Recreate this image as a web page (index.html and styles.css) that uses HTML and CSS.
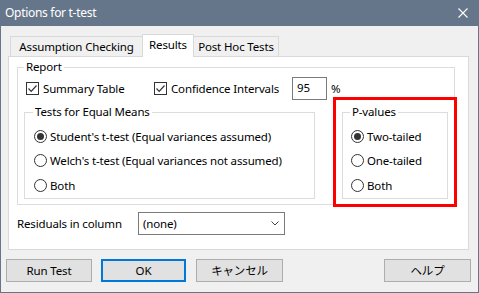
FILE: index.html
```html
<!DOCTYPE html>
<html>
<head>
<meta charset="utf-8">
<title>Options for t-test</title>
<link rel="stylesheet" href="styles.css">
</head>
<body>
<div class="window">
  <div class="titlebar">
    <span class="title">Options for t-test</span>
    <svg class="close" width="10" height="10" viewBox="0 0 10 10"><path d="M0.5 0.5 L9.5 9.5 M9.5 0.5 L0.5 9.5" stroke="#fff" stroke-width="1.1" fill="none"/></svg>
  </div>
  <div class="tabs">
    <div class="tab tab-assume">Assumption Checking</div>
    <div class="tab tab-results active">Results</div>
    <div class="tab tab-posthoc">Post Hoc Tests</div>
  </div>
  <div class="panel">
    <fieldset class="group report">
      <legend>Report</legend>
      <div class="report-row">
        <label class="check summary"><span class="box"><svg width="11" height="11" viewBox="0 0 11 11"><path d="M1.5 5.5 L4.2 8.3 L9.5 2.5" stroke="#333" stroke-width="1.2" fill="none"/></svg></span>Summary Table</label>
        <label class="check confidence"><span class="box"><svg width="11" height="11" viewBox="0 0 11 11"><path d="M1.5 5.5 L4.2 8.3 L9.5 2.5" stroke="#333" stroke-width="1.2" fill="none"/></svg></span>Confidence Intervals</label>
        <span class="num">95</span>
        <span class="pct">%</span>
      </div>
      <div class="groups">
        <fieldset class="group tests">
          <legend>Tests for Equal Means</legend>
          <div class="radio"><span class="circle on"></span>Student's t-test (Equal variances assumed)</div>
          <div class="radio"><span class="circle"></span>Welch's t-test (Equal variances not assumed)</div>
          <div class="radio"><span class="circle"></span>Both</div>
        </fieldset>
        <fieldset class="group pvalues">
          <legend>P-values</legend>
          <div class="radio"><span class="circle on"></span>Two-tailed</div>
          <div class="radio"><span class="circle"></span>One-tailed</div>
          <div class="radio"><span class="circle"></span>Both</div>
        </fieldset>
      </div>
    </fieldset>
    <div class="resid-row">
      <span class="resid-label">Residuals in column</span>
      <div class="select"><span>(none)</span><svg width="8" height="5" viewBox="0 0 8 5"><path d="M0.5 0.5 L4 4 L7.5 0.5" stroke="#444" stroke-width="1" fill="none"/></svg></div>
    </div>
    <div class="highlight"></div>
  </div>
  <div class="buttons">
    <div class="btn run">Run Test</div>
    <div class="btn ok">OK</div>
    <div class="btn cancel">キャンセル</div>
    <div class="btn help">ヘルプ</div>
  </div>
</div>
</body>
</html>
```

FILE: styles.css
```css
body {
  margin: 0;
  font-family: "Noto Sans", "Noto Sans CJK JP", sans-serif;
  font-size: 11.5px;
  letter-spacing: -0.15px;
  color: #000;
}

.window {
  width: 479px;
  height: 293px;
  box-sizing: border-box;
  border: 1px solid #66768a;
  border-top: 0;
  background: #f0f0f0;
  display: flex;
  flex-direction: column;
}

.titlebar {
  height: 26px;
  flex: none;
  background: #66768a;
  color: #fff;
  display: flex;
  align-items: center;
  justify-content: space-between;
  padding: 0 10px 0 4px;
}

.title {
  font-size: 12px;
  letter-spacing: -0.3px;
  line-height: 16px;
  margin-top: -1px;
}

.close {
  display: block;
}

.tabs {
  display: flex;
  align-items: flex-end;
  height: 22px;
  margin: 8px 0 0 9px;
}

.tab {
  height: 20px;
  box-sizing: border-box;
  border: 1px solid #d9d9d9;
  border-bottom: 0;
  background: #f0f0f0;
  display: flex;
  align-items: center;
  justify-content: center;
  line-height: 16px;
  padding-top: 1px;
}

.tab + .tab {
  margin-left: -1px;
}

.tab-assume { width: 133px; }
.tab-results { width: 52px; }
.tab-posthoc { width: 86px; }

.tab.active {
  height: 23px;
  margin-bottom: -1px;
  background: #fff;
  position: relative;
  z-index: 1;
  padding-top: 0;
  padding-bottom: 3px;
}

.panel {
  margin-left: 7px;
  width: 461px;
  height: 194px;
  box-sizing: border-box;
  border: 1px solid #d9d9d9;
  background: #fff;
  position: relative;
  padding: 2px 0 0 8px;
}

.group {
  margin: 0;
  border: 1px solid #dcdcdc;
  min-width: 0;
}

.group legend {
  padding: 0 2px;
  margin-left: -1px;
  line-height: 16px;
}

.report {
  width: 438px;
  box-sizing: border-box;
  padding: 0 0 5px 7px;
}

.report-row {
  display: flex;
  align-items: center;
  height: 23px;
  margin: 2px 0 0 1px;
}

.check {
  display: flex;
  align-items: center;
}

.box {
  width: 13px;
  height: 13px;
  box-sizing: border-box;
  border: 1px solid #333;
  background: #fff;
  margin-right: 4px;
  display: flex;
  align-items: center;
  justify-content: center;
}

.box svg {
  display: block;
}

.summary { width: 128px; }
.confidence { width: 138px; }

.num {
  width: 35px;
  height: 23px;
  box-sizing: border-box;
  border: 1px solid #7a7a7a;
  padding-left: 4px;
  line-height: 20px;
  background: #fff;
}

.pct {
  margin-left: 4px;
}

.groups {
  display: flex;
  margin-top: 4px;
}

.tests {
  width: 291px;
  box-sizing: border-box;
  margin-left: -1px;
  padding: 4px 0 0 9px;
}

.pvalues {
  width: 106px;
  box-sizing: border-box;
  margin-left: 27px;
  padding: 4px 0 0 8px;
}

.radio {
  display: flex;
  align-items: center;
  height: 24.5px;
  white-space: nowrap;
}

.circle {
  width: 13px;
  height: 13px;
  box-sizing: border-box;
  border: 1px solid #333;
  border-radius: 50%;
  background: #fff;
  margin-right: 3px;
  display: flex;
  align-items: center;
  justify-content: center;
  flex: none;
}

.circle.on::after {
  content: "";
  width: 7px;
  height: 7px;
  border-radius: 50%;
  background: #333;
}

.resid-row {
  display: flex;
  align-items: center;
  margin-top: 7px;
}

.resid-label {
  width: 121px;
}

.select {
  width: 147px;
  height: 23px;
  box-sizing: border-box;
  border: 1px solid #7a7a7a;
  background: #fff;
  display: flex;
  align-items: center;
  justify-content: space-between;
  padding: 0 5px 0 4px;
}

.select svg {
  display: block;
}

.highlight {
  position: absolute;
  left: 324px;
  top: 40px;
  width: 124px;
  height: 110px;
  box-sizing: border-box;
  border: 3px solid #ff0000;
}

.buttons {
  display: flex;
  margin: 9px 7px 0 5px;
}

.btn {
  height: 23px;
  box-sizing: border-box;
  border: 1px solid #adadad;
  background: #e1e1e1;
  display: flex;
  align-items: center;
  justify-content: center;
  line-height: 16px;
}

.run { width: 86px; }
.ok {
  width: 85px;
  margin-left: 9px;
  border: 2px solid #0078d7;
}
.cancel {
  width: 87px;
  margin-left: 10px;
}
.help {
  width: 87px;
  margin-left: auto;
}
```
